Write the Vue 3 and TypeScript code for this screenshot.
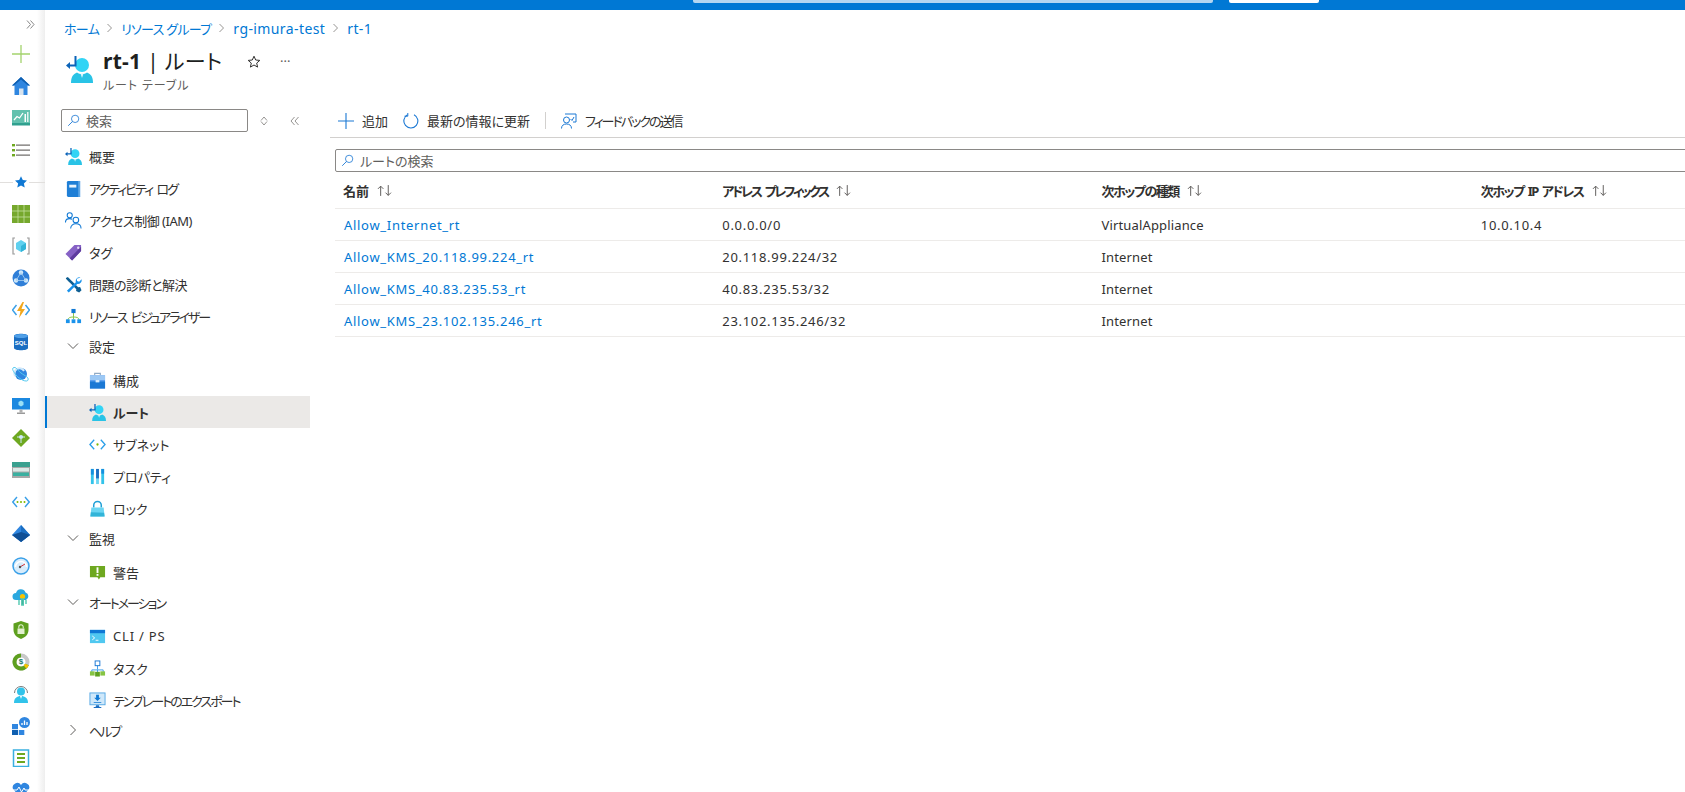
<script setup lang="ts">
interface NavItem {
  label: string
  icon?: string
  sub?: boolean
  group?: 'open' | 'closed'
  active?: boolean
  fit?: 'tight' | 'snug' | 'wide'
}

const railIcons: { name: string; label?: string }[] = [
  { name: 'r-plus' }, { name: 'r-home' }, { name: 'r-chart' }, { name: 'r-list' }, { name: 'r-star' }, { name: 'r-grid' },
  { name: 'r-cube' }, { name: 'r-globe' }, { name: 'r-func' }, { name: 'r-sql', label: 'SQL' }, { name: 'r-cosmos' }, { name: 'r-vm' },
  { name: 'r-diamond' }, { name: 'r-storage' }, { name: 'r-vnet' }, { name: 'r-aad' }, { name: 'r-gauge' }, { name: 'r-cloud' },
  { name: 'r-shield' }, { name: 'r-cost', label: '$' }, { name: 'r-help' }, { name: 'r-win' }, { name: 'r-doc' }, { name: 'r-heart' },
]

const navItems: NavItem[] = [
  { label: '概要', icon: 'route' },
  { label: 'アクティビティ ログ', icon: 'book', fit: 'tight' },
  { label: 'アクセス制御 (IAM)', icon: 'iam', fit: 'snug' },
  { label: 'タグ', icon: 'tag' },
  { label: '問題の診断と解決', icon: 'tools', fit: 'snug' },
  { label: 'リソース ビジュアライザー', icon: 'tree', fit: 'tight' },
  { label: '設定', group: 'open' },
  { label: '構成', icon: 'box', sub: true },
  { label: 'ルート', icon: 'route', sub: true, active: true },
  { label: 'サブネット', icon: 'subnet', sub: true },
  { label: 'プロパティ', icon: 'props', sub: true },
  { label: 'ロック', icon: 'lock', sub: true },
  { label: '監視', group: 'open' },
  { label: '警告', icon: 'alert', sub: true },
  { label: 'オートメーション', group: 'open', fit: 'tight' },
  { label: 'CLI / PS', icon: 'cli', sub: true, fit: 'wide' },
  { label: 'タスク', icon: 'task', sub: true },
  { label: 'テンプレートのエクスポート', icon: 'export', sub: true, fit: 'tight' },
  { label: 'ヘルプ', group: 'closed', fit: 'tight' },
]

const crumbs: { label: string; latin: boolean }[] = [
  { label: 'ホーム', latin: false },
  { label: 'リソース グループ', latin: false },
  { label: 'rg-imura-test', latin: true },
  { label: 'rt-1', latin: true },
]
const columns: { label: string; fit: string }[] = [
  { label: '名前', fit: '' },
  { label: 'アドレス プレフィックス', fit: 'head-tight' },
  { label: '次ホップの種類', fit: 'head-snug' },
  { label: '次ホップ IP アドレス', fit: 'head-snug' },
]
const routes = [
  { name: 'Allow_Internet_rt', prefix: '0.0.0.0/0', type: 'VirtualAppliance', ip: '10.0.10.4' },
  { name: 'Allow_KMS_20.118.99.224_rt', prefix: '20.118.99.224/32', type: 'Internet', ip: '' },
  { name: 'Allow_KMS_40.83.235.53_rt', prefix: '40.83.235.53/32', type: 'Internet', ip: '' },
  { name: 'Allow_KMS_23.102.135.246_rt', prefix: '23.102.135.246/32', type: 'Internet', ip: '' },
]
</script>

<template>
  <div class="page">
    <svg class="defs" aria-hidden="true">
      <symbol id="route" viewBox="0 0 27 27">
        <circle cx="16" cy="9" r="7" fill="#32d4f5" />
        <path d="M5 27c0-6 2-9 6-10.500 3 2 7 2 10 0 4 1.500 6 4.500 6 10.500z" fill="#29c3e6" />
        <path d="M14.500 17.500h3L16 22z" fill="#d8f6fd" />
        <path d="M9.500 0v9.500H3" fill="none" stroke="#0b63b8" stroke-width="2" />
        <path d="M0 9.500l4-3.500v7z" fill="#0b63b8" />
      </symbol>
      <symbol id="book" viewBox="0 0 18 18">
        <path d="M2 2.500A1.500 1.500 0 0 1 3.500 1H16v17H3.500A1.500 1.500 0 0 1 2 16.500z" fill="#1f7fd6" />
        <path d="M14 1h2v17h-2z" fill="#5ea7e6" />
        <rect x="4.500" y="5" width="7.500" height="3" fill="#e8f3fc" />
      </symbol>
      <symbol id="iam" viewBox="0 0 18 18">
        <g fill="none" stroke="#0f78d4" stroke-width="1.100">
          <circle cx="5" cy="3.500" r="2.700" />
          <path d="M.5 11c0-2.500 2-4 4.500-4 1 0 1.800.2 2.500.6" />
          <circle cx="11.500" cy="8.500" r="3" />
          <path d="M6 17.500c0-3 2.300-5 5.500-5s5.500 2 5.500 5" />
        </g>
      </symbol>
      <symbol id="tag" viewBox="0 0 18 18">
        <path d="M10 1h7v6.500L7.500 17.500 .5 10.500z" fill="#8661c5" />
        <path d="M17 7.500L7.500 17.500 5 15 17 3z" fill="#5e3b9e" />
        <circle cx="14" cy="4" r="1.300" fill="#e3d9f5" />
      </symbol>
      <symbol id="tools" viewBox="0 0 18 18">
        <path d="M1 2l2-1 4.500 4.500L14 12l2-.3L17.500 15 15 17.500 11.700 16l.3-2-6.500-6.500L4 6 1 3z" fill="#0f5f93" />
        <path d="M16.500 1.500a4 4 0 0 0-5 5L2 15.500 4 17.500l9-9a4 4 0 0 0 4.500-5L15 6l-2.200-.8L12.500 3z" fill="#1b93eb" />
      </symbol>
      <symbol id="tree" viewBox="0 0 18 18">
        <path d="M9 5v7M3 13c0-2.500 2-3.500 6-3.500s6 1 6 3.500" fill="none" stroke="#86c443" stroke-width="1" />
        <rect x="6.800" y="1" width="4.400" height="4.400" fill="#0f78d4" />
        <rect x="1" y="12" width="4" height="4" fill="#1b93eb" />
        <rect x="7" y="12" width="4" height="4" fill="#1b93eb" />
        <rect x="13" y="12" width="4" height="4" fill="#1b93eb" />
      </symbol>
      <symbol id="box" viewBox="0 0 18 18">
        <path d="M6 3.500V1.500h6v2" fill="none" stroke="#8fa9c4" stroke-width="1.200" />
        <rect x="1" y="3.500" width="16" height="14" fill="#5ea0ef" />
        <rect x="1" y="3.500" width="16" height="5" fill="#9cc8f4" />
        <rect x="1" y="10" width="16" height="7.500" fill="#1b78d4" />
        <rect x="7" y="8.500" width="4" height="2.500" fill="#d8ecfb" />
      </symbol>
      <symbol id="subnet" viewBox="0 0 18 18">
        <path d="M5.500 4L1 9l4.500 5M12.500 4L17 9l-4.500 5" fill="none" stroke="#2a9fe8" stroke-width="1.400" />
        <circle cx="9" cy="9" r="1.200" fill="#7fba00" />
      </symbol>
      <symbol id="props" viewBox="0 0 18 18">
        <rect x="2" y="1" width="3" height="16" fill="#32c3ea" />
        <rect x="2" y="1" width="3" height="6" fill="#1490df" />
        <rect x="7.500" y="1" width="3" height="16" fill="#6bd5f2" />
        <rect x="7.500" y="1" width="3" height="10" fill="#1b6ec2" />
        <rect x="13" y="1" width="3" height="16" fill="#32c3ea" />
        <rect x="13" y="1" width="3" height="5" fill="#1490df" />
      </symbol>
      <symbol id="lock" viewBox="0 0 18 18">
        <path d="M5 8V5.500a4 4 0 0 1 8 0V8" fill="none" stroke="#1f9fd6" stroke-width="1.600" />
        <path d="M2.500 8h13l1 9.500h-15z" fill="#6bd5f2" />
        <path d="M2 13L16 13.500l.5 4h-15z" fill="#32b4d8" />
      </symbol>
      <symbol id="alert" viewBox="0 0 18 18">
        <path d="M1 2h16v12H12l-1.500 2.500L9 14H1z" fill="#6ea820" />
        <rect x="8" y="3.500" width="2" height="6" fill="#fff" />
        <rect x="8" y="10.500" width="2" height="2" fill="#fff" />
      </symbol>
      <symbol id="cli" viewBox="0 0 18 18">
        <rect x="1" y="2" width="16" height="14" fill="#50c8f0" />
        <rect x="1" y="2" width="16" height="3.500" fill="#0f78d4" />
        <path d="M3.500 8.500L6 10.500 3.500 12.500M7 13h3" fill="none" stroke="#fff" stroke-width="1" />
      </symbol>
      <symbol id="task" viewBox="0 0 18 18">
        <path d="M9 6v4M3 13v-2.500h12V13M9 10.500V13" fill="none" stroke="#3a9be8" stroke-width="1" />
        <rect x="6.500" y="1" width="5" height="5" fill="none" stroke="#1b78d4" stroke-width="1" />
        <rect x="1" y="12" width="5" height="4.500" fill="#86c443" />
        <rect x="6.500" y="12.500" width="5" height="5" fill="#5ea01f" />
        <rect x="12" y="12" width="5" height="4.500" fill="#86c443" />
      </symbol>
      <symbol id="export" viewBox="0 0 18 18">
        <rect x="1" y="1" width="16" height="12.500" fill="#cfe8fa" stroke="#55a8e4" stroke-width="1" />
        <path d="M7.500 3h3v3h2L9 9.500 5.500 6h2zM5 10.500h8v1H5z" fill="#0f78d4" />
        <path d="M7.500 14h3l.5 2h2v1H5v-1h2z" fill="#1b6ec2" />
      </symbol>
      <symbol id="search" viewBox="0 0 16 16">
        <circle cx="10" cy="6" r="4.500" fill="none" stroke="#1b78d4" stroke-width="1" />
        <path d="M6.800 9.200L1.500 14.500" stroke="#1b78d4" stroke-width="1.100" />
      </symbol>

      <symbol id="r-plus" viewBox="0 0 18 18"><path d="M9 0v18M0 9h18" stroke="#a4d36e" stroke-width="1.300" /></symbol>
      <symbol id="r-home" viewBox="0 0 18 18">
        <path d="M9 0L0 8.500h2.500V18h13V8.500H18z" fill="#2f86e0" />
        <path d="M9 0L0 8.500h2L9 2.500l7 6h2z" fill="#0f5fb0" />
        <rect x="7" y="11.500" width="4.500" height="6.500" fill="#d8e3ee" />
      </symbol>
      <symbol id="r-chart" viewBox="0 0 18 18">
        <rect x="0" y="1" width="18" height="13.500" fill="#62c1ae" />
        <rect x="0" y="14" width="18" height="2.500" fill="#30a08f" />
        <path d="M2 11l3-3.500 2.500 1.500L11 4" fill="none" stroke="#fff" stroke-width="1.300" />
        <rect x="12.500" y="5" width="1.500" height="8" fill="#fff" />
        <rect x="15" y="3" width="1.500" height="10" fill="#e0f3ef" />
      </symbol>
      <symbol id="r-list" viewBox="0 0 18 18">
        <rect x="0" y="3" width="3" height="2.400" fill="#6ea820" />
        <rect x="0" y="8" width="3" height="2.400" fill="#6ea820" />
        <rect x="0" y="13" width="3" height="2.400" fill="#6ea820" />
        <rect x="4" y="3.400" width="14" height="1.500" fill="#8a8886" />
        <rect x="4" y="8.400" width="14" height="1.500" fill="#8a8886" />
        <rect x="4" y="13.400" width="14" height="1.500" fill="#8a8886" />
      </symbol>
      <symbol id="r-star" viewBox="0 0 18 18"><path d="M9 1.500l2.300 5 5.400.6-4 3.700 1.100 5.400L9 13.500l-4.800 2.700 1.100-5.400-4-3.700 5.400-.6z" fill="#0f78d4" /></symbol>
      <symbol id="r-grid" viewBox="0 0 18 18">
        <rect width="18" height="18" fill="#76a82d" />
        <path d="M6 0v18M12 0v18M0 6h18M0 12h18" stroke="#c4dfa0" stroke-width=".8" />
      </symbol>
      <symbol id="r-cube" viewBox="0 0 18 18">
        <path d="M3 1H1v16h2M15 1h2v16h-2" fill="none" stroke="#9a9a9a" stroke-width="1.200" />
        <path d="M9 3l5 3v6l-5 3-5-3V6z" fill="#5fd0ef" />
        <path d="M9 9l5-3v6l-5 3z" fill="#32b4d8" />
      </symbol>
      <symbol id="r-globe" viewBox="0 0 18 18">
        <circle cx="9" cy="9" r="8.500" fill="#2f7fd8" />
        <circle cx="9" cy="3.500" r="2.200" fill="#cfe8fa" />
        <circle cx="4" cy="11.500" r="2.200" fill="#cfe8fa" />
        <circle cx="14" cy="11.500" r="2.200" fill="#cfe8fa" />
        <path d="M9 3.500L4 11.500h10z" fill="none" stroke="#a8d0f2" stroke-width=".8" />
      </symbol>
      <symbol id="r-func" viewBox="0 0 18 18">
        <path d="M4.500 4L.5 9l4 5M13.500 4l4 5-4 5" fill="none" stroke="#3aa0e8" stroke-width="1.500" />
        <path d="M10.500 1L5 10h3.500L7 17l6-9H9.500L12 1z" fill="#f2a81d" />
      </symbol>
      <symbol id="r-sql" viewBox="0 0 18 18">
        <path d="M2 3c0-3 14-3 14 0v12c0 3-14 3-14 0z" fill="#1b6ec2" />
        <ellipse cx="9" cy="3" rx="7" ry="2" fill="#50a0e8" />
      </symbol>
      <symbol id="r-cosmos" viewBox="0 0 18 18">
        <circle cx="9" cy="9" r="6" fill="#2f86e0" />
        <path d="M3 11a5 5 0 0 1 9-5" fill="none" stroke="#cfe8fa" stroke-width="2" />
        <path d="M1 3c3-2 4 2 8 5s8 4 7 7-9-1-12-5-4-6-3-7z" fill="none" stroke="#50c8f0" stroke-width="1" />
      </symbol>
      <symbol id="r-vm" viewBox="0 0 18 18">
        <rect y="1" width="18" height="11.500" fill="#1b88e0" />
        <path d="M9 3.500l2.500 1.500v3L9 9.500 6.500 8V5z" fill="#9be0f5" />
        <rect x="7.500" y="12.500" width="3" height="3" fill="#b0b0b0" />
        <rect x="5" y="15.500" width="8" height="1.500" fill="#9a9a9a" />
      </symbol>
      <symbol id="r-diamond" viewBox="0 0 18 18">
        <path d="M9 0l9 9-9 9-9-9z" fill="#6ea820" />
        <circle cx="9" cy="8" r="2" fill="#cfe8fa" />
        <path d="M9 10v4M5 8h8" stroke="#cfe8fa" stroke-width="1" />
      </symbol>
      <symbol id="r-storage" viewBox="0 0 18 18">
        <rect y="1" width="18" height="16" fill="#a8a8a8" />
        <rect x="0" y="1" width="18" height="5" fill="#3aa08f" />
        <rect x="1" y="7" width="16" height="3.500" fill="#dbe9e6" />
        <rect x="1" y="11.500" width="16" height="3.500" fill="#3ab0a0" />
      </symbol>
      <symbol id="r-vnet" viewBox="0 0 18 18">
        <path d="M5 4L.8 9 5 14M13 4l4.200 5L13 14" fill="none" stroke="#3aa0e8" stroke-width="1.400" />
        <circle cx="5.500" cy="9" r="1" fill="#7fba00" />
        <circle cx="9" cy="9" r="1" fill="#7fba00" />
        <circle cx="12.500" cy="9" r="1" fill="#7fba00" />
      </symbol>
      <symbol id="r-aad" viewBox="0 0 18 18">
        <path d="M9 0l9 10-9 7-9-7z" fill="#2f86e0" />
        <path d="M9 0l9 10-9 7z" fill="#1b6ec2" />
        <path d="M0 10l9-3 9 3-9 7z" fill="#0f4f96" />
      </symbol>
      <symbol id="r-gauge" viewBox="0 0 18 18">
        <circle cx="9" cy="9" r="8" fill="#d8ecfb" stroke="#3aa0e8" stroke-width="1.500" />
        <path d="M3.500 10a5.500 5.500 0 0 1 11 0" fill="none" stroke="#fff" stroke-width="1.500" />
        <path d="M8 10l5-3" stroke="#d13438" stroke-width="1" />
        <circle cx="8" cy="10" r="1.200" fill="#505050" />
      </symbol>
      <symbol id="r-cloud" viewBox="0 0 18 18">
        <path d="M4 11a3.500 3.500 0 0 1 0-7 5 5 0 0 1 9.500-.5A4 4 0 0 1 14 11z" fill="#2aa8df" />
        <circle cx="10.500" cy="7.500" r="2.600" fill="#f8c300" />
        <path d="M9.800 10h1.500v6h-1.500zM7 11v5M14 11v4" stroke="#50c8b0" stroke-width="1.400" />
      </symbol>
      <symbol id="r-shield" viewBox="0 0 18 18">
        <path d="M9 0l7.500 2.500V9c0 4.500-3.500 7.500-7.500 9C5 16.500 1.500 13.500 1.500 9V2.500z" fill="#5ea01f" />
        <rect x="5.500" y="7.500" width="7" height="5.500" fill="#e2f0cf" />
        <path d="M6.800 7.500V6a2.200 2.200 0 0 1 4.400 0v1.500" fill="none" stroke="#e2f0cf" stroke-width="1.100" />
      </symbol>
      <symbol id="r-cost" viewBox="0 0 18 18">
        <circle cx="9" cy="9" r="6.500" fill="none" stroke="#c8c8c8" stroke-width="4" />
        <path d="M15 11.500A6.500 6.500 0 1 1 9 2.500" fill="none" stroke="#5ea01f" stroke-width="4" />
        <path d="M15 11.500a6.500 6.500 0 0 1-2 2.500" fill="none" stroke="#f8c300" stroke-width="4" />
      </symbol>
      <symbol id="r-help" viewBox="0 0 18 18">
        <path d="M2.500 8a6.500 6.500 0 0 1 13 0" fill="none" stroke="#7a7a7a" stroke-width="1" />
        <circle cx="9" cy="6.500" r="4" fill="#32c3ea" />
        <path d="M2 18c0-5 3-7 7-7s7 2 7 7z" fill="#32c3ea" />
        <path d="M8 11l1 3 1-3z" fill="#fff" />
      </symbol>
      <symbol id="r-win" viewBox="0 0 18 18">
        <circle cx="12.500" cy="5.500" r="5.500" fill="#2f86e0" />
        <path d="M10 8V6M12.500 8V3.500M15 8V5" stroke="#fff" stroke-width="1.300" />
        <rect x="0" y="7" width="6" height="5.200" fill="#2f86e0" />
        <rect x="0" y="13" width="6" height="5" fill="#0f5fb0" />
        <rect x="6.800" y="13" width="5.500" height="5" fill="#2f86e0" />
      </symbol>
      <symbol id="r-doc" viewBox="0 0 18 18">
        <rect x="1.500" y="1" width="15" height="16.500" fill="#fff" stroke="#3ab0e0" stroke-width="1.500" />
        <rect x="5" y="4" width="8" height="2" fill="#6ea820" />
        <rect x="5" y="8" width="8" height="2" fill="#6ea820" />
        <rect x="5" y="12" width="8" height="2" fill="#6ea820" />
      </symbol>
      <symbol id="r-heart" viewBox="0 0 18 18">
        <path d="M9 17L1 8a4.500 4.500 0 0 1 8-4 4.500 4.500 0 0 1 8 4z" fill="#2f86e0" />
        <path d="M1 9h4l2-3 2.500 5L12 7l1 2h5" fill="none" stroke="#fff" stroke-width="1" />
      </symbol>
    </svg>

    <header class="topbar">
      <div class="top-search"></div>
      <div class="top-button"></div>
    </header>

    <div class="shell">
      <aside class="rail">
        <div class="rail-toggle">
          <svg width="9" height="9" viewBox="0 0 9 9"><path d="M1 .5l3.500 4L1 8.500M4.500 .5l3.500 4-3.500 4" fill="none" stroke="#7a7a7a" stroke-width=".9" /></svg>
        </div>
        <div
          v-for="item in railIcons"
          :key="item.name"
          class="rail-item"
          :class="{ 'rail-fav': item.name === 'r-star' }"
        >
          <svg class="rail-icon"><use :href="'#' + item.name" /></svg>
          <span v-if="item.label" class="rail-label" :class="item.name">{{ item.label }}</span>
        </div>
      </aside>

      <div class="content">
        <nav class="crumbs">
          <template v-for="(crumb, i) in crumbs" :key="crumb.label">
            <a class="crumb" :class="{ latin: crumb.latin }">{{ crumb.label }}</a>
            <svg v-if="i < crumbs.length - 1" class="crumb-sep" viewBox="0 0 8 10"><path d="M1.500 1l4 4-4 4" fill="none" stroke="#8a8886" stroke-width=".9" /></svg>
          </template>
        </nav>

        <div class="title-block">
          <svg class="title-icon"><use href="#route" /></svg>
          <div class="title-text">
            <h1 class="title"><b>rt-1</b> | ルート</h1>
            <div class="subtitle">ルート テーブル</div>
          </div>
          <svg class="title-star" viewBox="0 0 14 14"><path d="M7 1.200l1.700 3.800 4.100.4-3.100 2.700.9 4L7 10l-3.600 2.100.9-4-3.100-2.700 4.100-.4z" fill="none" stroke="#323130" stroke-width="1" /></svg>
          <span class="title-more">···</span>
        </div>

        <div class="split">
          <aside class="menu">
            <div class="menu-search-row">
              <div class="searchbox menu-search">
                <svg class="search-icon"><use href="#search" /></svg>
                <span>検索</span>
              </div>
              <svg class="updown" viewBox="0 0 8 12"><path d="M4 2l3 3.500M4 2L1 5.500M4 10l3-3.500M4 10L1 6.500" fill="none" stroke="#8a8886" stroke-width=".9" /></svg>
              <svg class="collapse" viewBox="0 0 10 10"><path d="M4.500 1L1 5l3.500 4M8.500 1L5 5l3.500 4" fill="none" stroke="#8a8886" stroke-width=".9" /></svg>
            </div>
            <ul class="menu-list">
              <li
                v-for="item in navItems"
                :key="item.label"
                class="menu-item"
                :class="{ sub: item.sub, active: item.active, group: item.group }"
              >
                <svg v-if="item.icon" class="menu-icon"><use :href="'#' + item.icon" /></svg>
                <svg v-else-if="item.group === 'open'" class="menu-chevron" viewBox="0 0 12 12"><path d="M1 3.500l5 5 5-5" fill="none" stroke="#605e5c" stroke-width="1" /></svg>
                <svg v-else class="menu-chevron" viewBox="0 0 12 12"><path d="M3.500 1l5 5-5 5" fill="none" stroke="#605e5c" stroke-width="1" /></svg>
                <span :class="item.fit">{{ item.label }}</span>
              </li>
            </ul>
          </aside>

          <main class="main">
            <div class="toolbar">
              <button class="tool">
                <svg class="tool-icon" viewBox="0 0 16 16"><path d="M8 0v16M0 8h16" stroke="#1b78d4" stroke-width="1.100" /></svg>
                <span>追加</span>
              </button>
              <button class="tool">
                <svg class="tool-icon" viewBox="0 0 16 16"><path d="M4.500 1.800A7 7 0 1 0 11 1.700" fill="none" stroke="#1b78d4" stroke-width="1.100" /><path d="M4.800 0v3.200H1.500" fill="none" stroke="#1b78d4" stroke-width="1" /></svg>
                <span>最新の情報に更新</span>
              </button>
              <div class="tool-divider"></div>
              <button class="tool">
                <svg class="tool-icon" viewBox="0 0 16 16"><g fill="none" stroke="#1b78d4" stroke-width="1"><circle cx="5.500" cy="7" r="3" /><path d="M.5 15.500c0-3 2-4.500 5-4.500s5 1.500 5 4.500M4 1h11v8h-3" /><path d="M9.500 6l1.500 1.500L13 4" /></g></svg>
                <span class="tight">フィードバックの送信</span>
              </button>
            </div>

            <div class="searchbox filter">
              <svg class="search-icon"><use href="#search" /></svg>
              <span>ルートの検索</span>
            </div>

            <div class="table">
              <div class="row head">
                <div v-for="col in columns" :key="col.label" class="cell">
                  <span :class="col.fit">{{ col.label }}</span>
                  <svg class="sort" viewBox="0 0 16 12"><path d="M4 11V2M1.500 4.500L4 2l2.500 2.500M11 1v9.500M8.500 8L11 10.500 13.500 8" fill="none" stroke="#605e5c" stroke-width=".9" /></svg>
                </div>
              </div>
              <div v-for="r in routes" :key="r.name" class="row">
                <div class="cell"><a class="link">{{ r.name }}</a></div>
                <div class="cell num">{{ r.prefix }}</div>
                <div class="cell kind">{{ r.type }}</div>
                <div class="cell num">{{ r.ip }}</div>
              </div>
            </div>
          </main>
        </div>
      </div>
    </div>
  </div>
</template>

<style>
html,
body {
  margin: 0;
  overflow: hidden;
  background: #fff;
}
</style>

<style scoped>
.page {
  width: 1685px;
  height: 792px;
  overflow: hidden;
  display: flex;
  flex-direction: column;
  font-family: "Noto Sans", "Noto Sans CJK JP", sans-serif;
  font-feature-settings: "palt";
  font-size: 13px;
  color: #323130;
  background: #fff;
}
.defs {
  position: absolute;
  width: 0;
  height: 0;
}
.tight {
  letter-spacing: -2px;
  word-spacing: 3px;
}
.snug {
  letter-spacing: -0.5px;
}
.wide {
  letter-spacing: 0.8px;
}
.topbar {
  flex: none;
  height: 10px;
  background: #0078d4;
  display: flex;
  align-items: flex-start;
  gap: 16px;
  padding-left: 693px;
}
.top-search {
  width: 520px;
  height: 3px;
  background: #b4d6f1;
  border-radius: 0 0 2px 2px;
}
.top-button {
  width: 90px;
  height: 3px;
  background: #fff;
  border-radius: 0 0 2px 2px;
}
.shell {
  flex: 1;
  display: flex;
  min-height: 0;
}
.rail {
  flex: none;
  width: 45px;
  box-sizing: border-box;
  overflow: hidden;
  background: linear-gradient(to right, #fff 0, #fff 37px, #eeeeee 45px);
}
.rail-toggle {
  height: 28px;
  display: flex;
  justify-content: flex-end;
  align-items: center;
  padding-right: 10px;
}
.rail-item {
  height: 32px;
  width: 42px;
  display: flex;
  align-items: center;
  justify-content: center;
  position: relative;
}
.rail-fav::before {
  content: "";
  position: absolute;
  left: 0;
  right: -3px;
  top: 16px;
  border-top: 1px solid #e1dfdd;
}
.rail-fav .rail-icon {
  position: relative;
  background: #fff;
  width: 16px;
  height: 14px;
}
.rail-icon {
  width: 18px;
  height: 18px;
  flex: none;
}
.rail-label {
  position: absolute;
  left: 0;
  right: 0;
  text-align: center;
  font-family: "Liberation Sans", sans-serif;
  font-weight: 700;
  line-height: 8px;
  top: 13px;
}
.rail-label.r-sql {
  font-size: 6px;
  color: #fff;
}
.rail-label.r-cost {
  font-size: 8px;
  color: #1a7a70;
  top: 12px;
}
.content {
  flex: 1;
  min-width: 0;
  display: flex;
  flex-direction: column;
}
.crumbs {
  height: 36px;
  padding-left: 19px;
  display: flex;
  align-items: center;
  gap: 7px;
  font-size: 13px;
}
.crumb {
  color: #0078d4;
  letter-spacing: -0.7px;
}
.crumb.latin {
  font-size: 14px;
  letter-spacing: 0.4px;
}
.crumb-sep {
  width: 8px;
  height: 10px;
}
.title-block {
  height: 58px;
  padding-left: 21px;
  display: flex;
  align-items: flex-start;
}
.title-icon {
  width: 27px;
  height: 27px;
  margin-top: 10px;
  flex: none;
}
.title-text {
  margin-left: 10px;
  width: 144px;
}
.title {
  margin: 0;
  font-size: 21px;
  font-weight: 400;
  line-height: 30px;
  white-space: nowrap;
  color: #201f1e;
  letter-spacing: 0.3px;
}
.title b {
  font-weight: 700;
}
.subtitle {
  font-size: 12px;
  line-height: 16px;
  margin-top: 2px;
  color: #605e5c;
  white-space: nowrap;
  letter-spacing: 0.9px;
}
.title-star {
  width: 14px;
  height: 14px;
  margin-top: 9px;
}
.title-more {
  margin-left: 19px;
  margin-top: 6px;
  font-size: 13px;
  color: #605e5c;
  line-height: 18px;
}
.split {
  flex: 1;
  min-height: 0;
  display: flex;
}
.menu {
  flex: none;
  width: 265px;
}
.menu-search-row {
  display: flex;
  align-items: center;
  height: 23px;
  margin-top: 5px;
  padding-left: 16px;
}
.searchbox {
  box-sizing: border-box;
  height: 23px;
  border: 1px solid #8a8886;
  border-radius: 2px;
  display: flex;
  align-items: center;
  color: #605e5c;
  padding-left: 5px;
  gap: 6px;
}
.menu-search {
  width: 187px;
}
.search-icon {
  width: 13px;
  height: 13px;
  flex: none;
}
.updown {
  width: 8px;
  height: 12px;
  margin-left: 12px;
}
.collapse {
  width: 10px;
  height: 10px;
  margin-left: 22px;
}
.menu-list {
  list-style: none;
  margin: 8px 0 0;
  padding: 0;
}
.menu-item {
  height: 32px;
  display: flex;
  align-items: center;
  padding-left: 20px;
  gap: 7px;
  box-sizing: border-box;
  white-space: nowrap;
}
.menu-item.sub {
  padding-left: 44px;
}
.menu-item.group {
  padding-bottom: 4px;
  gap: 8px;
}
.menu-item.active {
  background: #ebe9e7;
  box-shadow: inset 2px 0 0 #0078d4;
  font-weight: 700;
}
.menu-icon {
  width: 17px;
  height: 17px;
  flex: none;
}
.menu-chevron {
  width: 12px;
  height: 12px;
  margin: 0 2px;
  flex: none;
}
.main {
  flex: 1;
  min-width: 0;
  margin-left: 20px;
}
.toolbar {
  height: 34px;
  box-sizing: border-box;
  display: flex;
  align-items: center;
  border-bottom: 1px solid #d2d0ce;
  padding: 0 0 0 8px;
}
.tool {
  display: flex;
  align-items: center;
  gap: 8px;
  border: 0;
  background: none;
  padding: 0;
  font: inherit;
  color: #323130;
  margin-right: 15px;
}
.tool-icon {
  width: 16px;
  height: 16px;
  flex: none;
}
.tool-divider {
  width: 1px;
  height: 17px;
  background: #d2d0ce;
  margin-right: 15px;
}
.filter {
  margin: 11px 0 0 5px;
  width: 1400px;
}
.table {
  margin-left: 5px;
  width: 1400px;
}
.row {
  display: grid;
  grid-template-columns: repeat(4, 379.250px);
  height: 32px;
  align-items: center;
  border-bottom: 1px solid #edebe9;
  box-sizing: border-box;
}
.row.head {
  height: 37px;
  font-weight: 700;
  font-size: 13px;
}
.head-tight {
  letter-spacing: -2.4px;
  word-spacing: 3px;
}
.head-snug {
  letter-spacing: -1.5px;
  word-spacing: 2px;
}
.cell {
  padding-left: 8px;
  display: flex;
  align-items: center;
  gap: 7px;
  white-space: nowrap;
}
.num {
  letter-spacing: 0.7px;
}
.kind {
  letter-spacing: 0.15px;
}
.link {
  color: #0078d4;
  padding-left: 1px;
  letter-spacing: 0.7px;
}
.sort {
  width: 18px;
  height: 13px;
}
</style>
